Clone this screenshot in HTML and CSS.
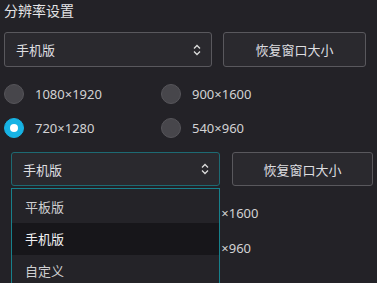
FILE: index.html
```html
<!DOCTYPE html>
<html lang="zh">
<head>
    <meta charset="UTF-8">
    <title>分辨率设置</title>
    <link rel="stylesheet" href="styles.css">
</head>
<body>
    <div class="panel">
        <div class="title">分辨率设置</div>
        <div class="toolRow">
            <div class="select">
                <span>手机版</span>
                <svg class="chevron" width="8" height="14" viewBox="0 0 8 14"><path d="M1 5.5 L4 2.5 L7 5.5 M1 8.5 L4 11.5 L7 8.5" fill="none" stroke="#dcdcdc" stroke-width="1.3"/></svg>
            </div>
            <div class="button">恢复窗口大小</div>
        </div>
        <div class="radioGrid">
            <div class="radio"><span class="dot"></span>1080×1920</div>
            <div class="radio"><span class="dot"></span>900×1600</div>
            <div class="radio"><span class="dot checked"></span>720×1280</div>
            <div class="radio"><span class="dot"></span>540×960</div>
        </div>
    </div>
    <div class="panel lower">
        <div class="toolRow">
            <div class="selectWrap">
                <div class="select open">
                    <span>手机版</span>
                    <svg class="chevron" width="8" height="14" viewBox="0 0 8 14"><path d="M1 5.5 L4 2.5 L7 5.5 M1 8.5 L4 11.5 L7 8.5" fill="none" stroke="#dcdcdc" stroke-width="1.3"/></svg>
                </div>
                <div class="dropdown">
                    <div class="option">平板版</div>
                    <div class="option active">手机版</div>
                    <div class="option">自定义</div>
                </div>
            </div>
            <div class="button">恢复窗口大小</div>
        </div>
        <!-- left column sits under the open dropdown -->
        <div class="radioGrid shifted">
            <div class="radio covered"><span class="dot"></span>1080×1920</div>
            <div class="radio"><span class="dot"></span><span><span class="clip">900</span>×1600</span></div>
            <div class="radio covered"><span class="dot checked"></span>720×1280</div>
            <div class="radio"><span class="dot"></span><span><span class="clip">540</span>×960</span></div>
        </div>
    </div>
</body>
</html>
```

FILE: styles.css
```css
body{
    margin: 0px;
    background-color: #232227;
    font-family: "Noto Sans", "Noto Sans CJK SC", sans-serif;
    font-size: 13px;
    color: #d2d2d4;
    overflow: hidden;
    height: 283px;
}
.panel{
    padding: 0px 10px 0px 4px;
}
.title{
    font-size: 14px;
    line-height: 22px;
    color: #e4e4e6;
}
.toolRow{
    display: flex;
    gap: 11px;
    margin-top: 10px;
}
.select{
    width: 208px;
    height: 35px;
    box-sizing: border-box;
    border: 1px solid #59585d;
    border-radius: 3px;
    background-color: #2a292e;
    display: flex;
    align-items: center;
    justify-content: space-between;
    padding: 0px 10px 0px 11px;
    color: #dedee0;
}
.select.open{
    border-color: #1d6a73;
    width: 209px;
    height: 34px;
}
.button{
    width: 143px;
    height: 35px;
    box-sizing: border-box;
    border: 1px solid #59585d;
    border-radius: 3px;
    background-color: #2a292e;
    display: flex;
    align-items: center;
    justify-content: center;
    color: #dedee0;
}
.radioGrid{
    display: grid;
    grid-template-columns: 157px 157px;
    margin-top: 10px;
}
.radio{
    height: 34px;
    display: flex;
    align-items: center;
    gap: 11px;
}
.dot{
    width: 20px;
    height: 20px;
    box-sizing: border-box;
    border-radius: 50%;
    background-color: #47464b;
    border: 1px solid #56555a;
    position: relative;
}
.dot.checked{
    background-color: #17b3e4;
    border-color: #17b3e4;
}
.dot.checked::after{
    content: "";
    position: absolute;
    width: 8px;
    height: 8px;
    border-radius: 50%;
    background-color: #ffffff;
    left: 5px;
    top: 5px;
}
.lower{
    margin-top: 7px;
    padding-left: 11px;
    padding-right: 4px;
}
.lower .toolRow{
    margin-top: 0px;
    gap: 12px;
}
.lower .button{
    height: 34px;
    width: 142px;
}
.selectWrap{
    position: relative;
}
.dropdown{
    position: absolute;
    top: 36px;
    left: 0px;
    width: 209px;
    box-sizing: border-box;
    border: 1px solid #17808b;
    border-bottom: none;
    background-color: #242328;
    padding-top: 2px;
    z-index: 2;
}
.option{
    height: 32px;
    line-height: 32px;
    padding-left: 13px;
    color: #cfcfd1;
}
.option.active{
    background-color: #17161a;
    color: #f0f0f2;
}
.radioGrid.shifted{
    margin-top: 9px;
    margin-left: 0px;
}
.shifted .radio{
    height: 35px;
}
.covered, .clip{
    visibility: hidden;
}
```
